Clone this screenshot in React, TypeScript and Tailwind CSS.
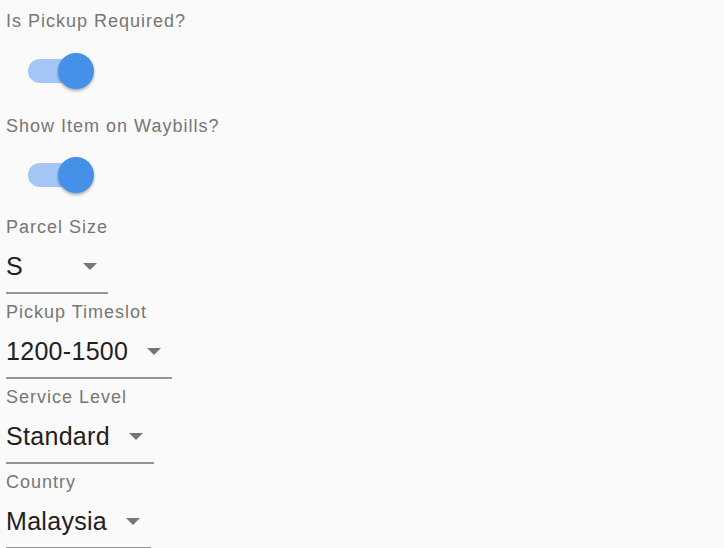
import { useState } from 'react';

function Toggle({ on, onChange }: { on: boolean; onChange: () => void }) {
  return (
    <button onClick={onChange} className="relative block w-[66px] h-[36px] ml-[22px] cursor-pointer">
      <span
        className={`absolute left-0 top-[6px] w-[60px] h-[24px] rounded-full ${
          on ? 'bg-[#a3c6f4]' : 'bg-[#b8b8b8]'
        }`}
      />
      <span
        className={`absolute top-0 w-[36px] h-[36px] rounded-full shadow-[0_2px_3px_rgba(0,0,0,0.3)] ${
          on ? 'left-[30px] bg-[#4590e8]' : 'left-[-6px] bg-[#f5f5f5]'
        }`}
      />
    </button>
  );
}

function Field({ label, value, minW }: { label: string; value: string; minW?: string }) {
  return (
    <div className="h-[85px]">
      <div className="h-[21px] leading-[21px] text-[18px] tracking-[1px] text-[#767676]">{label}</div>
      <div
        className={`relative inline-flex items-center mt-[14px] pb-[12px] pr-[44px] border-b-2 border-[#959595] ${minW ?? ''}`}
      >
        <span className="h-[28px] leading-[28px] text-[25px] tracking-[0.3px] text-[#212121]">{value}</span>
        <svg
          className="absolute right-[11px] top-[11px]"
          width="14"
          height="7"
          viewBox="0 0 14 7"
        >
          <polygon points="0,0 14,0 7,7" fill="#767676" />
        </svg>
      </div>
    </div>
  );
}

export default function App() {
  const [pickup, setPickup] = useState(true);
  const [waybill, setWaybill] = useState(true);

  return (
    <div className="min-h-screen bg-[#fafafa] pl-[6px] pt-[11px] font-['Liberation_Sans',Arial,sans-serif]">
      <div className="h-[21px] leading-[21px] text-[18px] tracking-[1px] text-[#767676]">Is Pickup Required?</div>
      <div className="h-[84px] pt-[21px]">
        <Toggle on={pickup} onChange={() => setPickup(!pickup)} />
      </div>
      <div className="h-[21px] leading-[21px] text-[18px] tracking-[1px] text-[#767676]">Show Item on Waybills?</div>
      <div className="h-[80px] pt-[20px]">
        <Toggle on={waybill} onChange={() => setWaybill(!waybill)} />
      </div>
      <Field label="Parcel Size" value="S" minW="min-w-[102px]" />
      <Field label="Pickup Timeslot" value="1200-1500" />
      <Field label="Service Level" value="Standard" />
      <Field label="Country" value="Malaysia" />
    </div>
  );
}
